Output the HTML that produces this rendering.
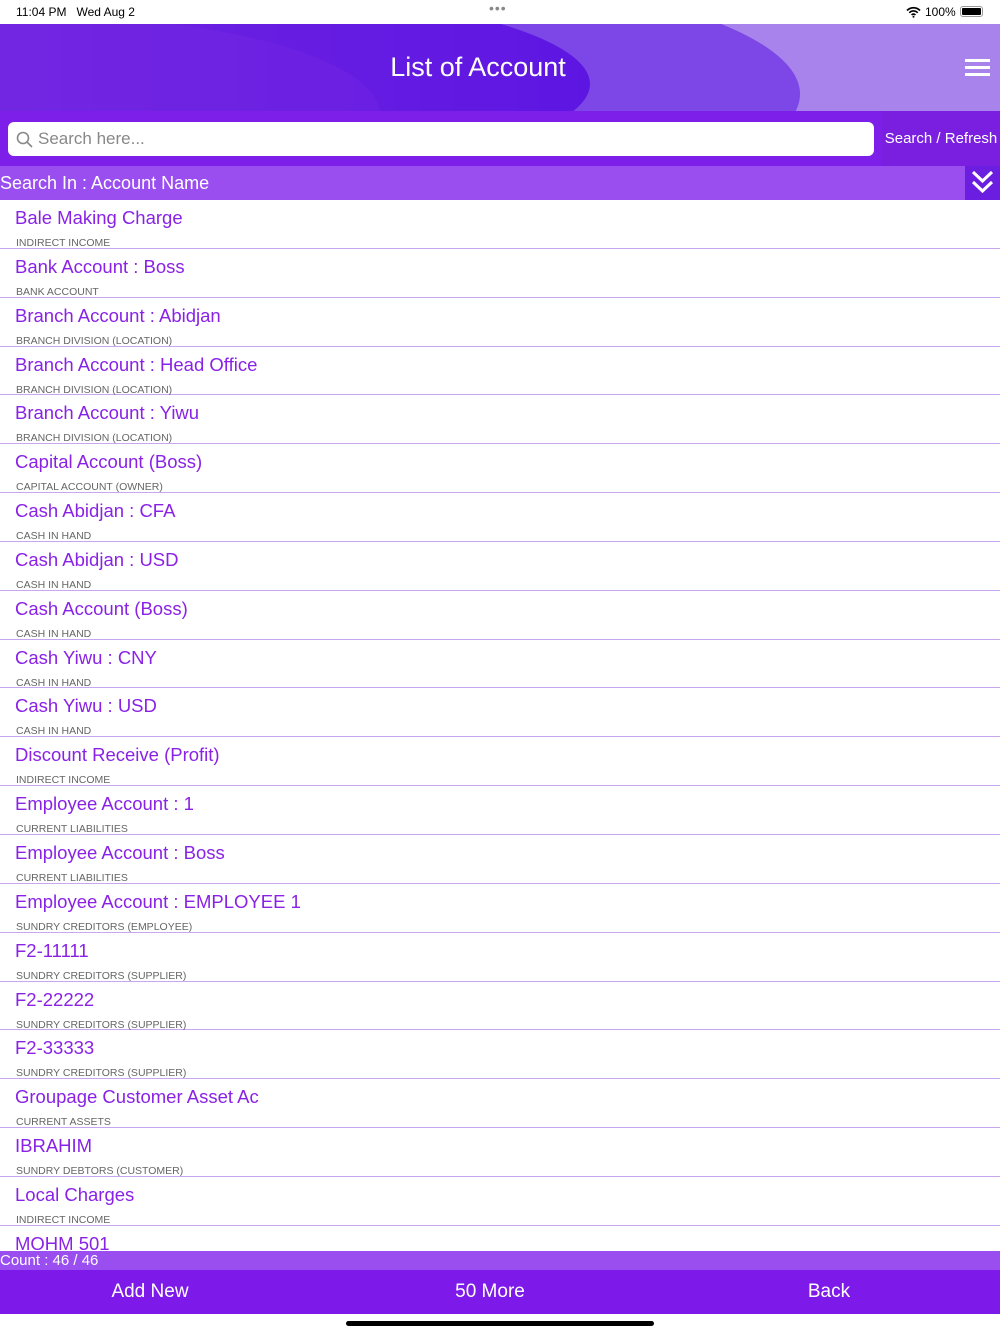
<!DOCTYPE html>
<html><head><style>
*{margin:0;padding:0;box-sizing:border-box}
body{width:1000px;height:1334px;overflow:hidden;background:#fff;font-family:"Liberation Sans",sans-serif;position:relative}
.status{position:absolute;top:0;left:0;width:1000px;height:24px;font-size:12px;color:#000}
.hdr{position:absolute;top:24px;left:0;width:1000px;height:87px;overflow:hidden;background:#a983ec}
.hdr .e{position:absolute;border-radius:50%}
.search{position:absolute;top:111px;left:0;width:1000px;height:55px;background:#7d1fe8}
.sin{position:absolute;top:166px;left:0;width:1000px;height:34px;background:#9a4ef0;color:#fff;font-size:18px;line-height:34px}
.list{position:absolute;top:200px;left:0;width:1000px;height:1051px;overflow:hidden}
.row{height:48.85px;border-bottom:1px solid #c9a6f2;position:relative}
.row .t{position:absolute;left:15px;top:7px;font-size:18.5px;color:#8a22e6}
.row .s{position:absolute;left:16px;top:37px;font-size:10.5px;color:#666}
.count{position:absolute;top:1251px;left:0;width:1000px;height:19px;background:#9a4ef0;color:#fff;font-size:15px;line-height:19px}
.foot{position:absolute;top:1270px;left:0;width:1000px;height:44px;background:#7d1ae9;color:#fff;font-size:19px;line-height:44px}
.foot span{position:absolute;transform:translateX(-50%)}
</style></head><body>
<div class="status">
<span style="position:absolute;left:16px;top:5px">11:04 PM&nbsp;&nbsp; Wed Aug 2</span>
<span style="position:absolute;left:489px;top:0px;letter-spacing:1px;color:#888;font-size:14px">•••</span>
<svg style="position:absolute;left:906px;top:6px" width="15" height="12" viewBox="0 0 15 12"><path d="M1 4.5a9 9 0 0 1 13 0M3.3 6.8a5.7 5.7 0 0 1 8.4 0M5.6 9a2.5 2.5 0 0 1 3.8 0" fill="none" stroke="#000" stroke-width="1.7"/><circle cx="7.5" cy="10.8" r="1" fill="#000"/></svg>
<span style="position:absolute;left:925px;top:5px">100%</span>
<span style="position:absolute;left:960px;top:6px;width:23px;height:11px;border:1px solid #999;border-radius:3px;padding:1px"><span style="display:block;width:100%;height:100%;background:#000;border-radius:1px"></span></span>
</div>
<div class="hdr">
<div class="e" style="left:-200px;top:-60px;width:1000px;height:260px;background:#7c47e6"></div>
<div class="e" style="left:-300px;top:-40px;width:890px;height:200px;background:linear-gradient(90deg,#7a2be0,#5d16e2)"></div>
<div class="e" style="left:-350px;top:-10px;width:730px;height:200px;background:linear-gradient(90deg,#7b2de2,#6a1fe2)"></div>
<div style="position:absolute;left:0;top:0;width:1000px;height:87px;text-align:center;color:#fff;font-size:27px;line-height:87px;text-indent:-44px">List of Account</div>
<div style="position:absolute;left:965px;top:35px;width:25px;height:3px;background:#fff;box-shadow:0 7px 0 #fff,0 14px 0 #fff"></div>
</div>
<div class="search">
<div style="position:absolute;left:8px;top:11px;width:866px;height:34px;background:#fff;border-radius:6px">
<svg style="position:absolute;left:8px;top:9px" width="18" height="18" viewBox="0 0 18 18"><circle cx="7" cy="7" r="5.5" fill="none" stroke="#888" stroke-width="1.6"/><line x1="11" y1="11" x2="16" y2="16" stroke="#888" stroke-width="1.6"/></svg>
<span style="position:absolute;left:30px;top:7px;font-size:17px;color:#888">Search here...</span></div>
<div style="position:absolute;left:882px;top:0;width:118px;height:55px;background:#7a1fe0;color:#fff;font-size:15px;line-height:55px;text-align:center">Search / Refresh</div>
</div>
<div class="sin">Search In : Account Name
<div style="position:absolute;left:965px;top:0;width:35px;height:34px;background:#6b1de0">
<svg width="35" height="34" viewBox="0 0 35 34"><path d="M8 6l9.5 9 9.5-9M8 16l9.5 9 9.5-9" fill="none" stroke="#fff" stroke-width="3"/></svg></div></div>
<div class="list">
<div class="row"><div class="t">Bale Making Charge</div><div class="s">INDIRECT INCOME</div></div>
<div class="row"><div class="t">Bank Account : Boss</div><div class="s">BANK ACCOUNT</div></div>
<div class="row"><div class="t">Branch Account : Abidjan</div><div class="s">BRANCH DIVISION (LOCATION)</div></div>
<div class="row"><div class="t">Branch Account : Head Office</div><div class="s">BRANCH DIVISION (LOCATION)</div></div>
<div class="row"><div class="t">Branch Account : Yiwu</div><div class="s">BRANCH DIVISION (LOCATION)</div></div>
<div class="row"><div class="t">Capital Account (Boss)</div><div class="s">CAPITAL ACCOUNT (OWNER)</div></div>
<div class="row"><div class="t">Cash Abidjan : CFA</div><div class="s">CASH IN HAND</div></div>
<div class="row"><div class="t">Cash Abidjan : USD</div><div class="s">CASH IN HAND</div></div>
<div class="row"><div class="t">Cash Account (Boss)</div><div class="s">CASH IN HAND</div></div>
<div class="row"><div class="t">Cash Yiwu : CNY</div><div class="s">CASH IN HAND</div></div>
<div class="row"><div class="t">Cash Yiwu : USD</div><div class="s">CASH IN HAND</div></div>
<div class="row"><div class="t">Discount Receive (Profit)</div><div class="s">INDIRECT INCOME</div></div>
<div class="row"><div class="t">Employee Account : 1</div><div class="s">CURRENT LIABILITIES</div></div>
<div class="row"><div class="t">Employee Account : Boss</div><div class="s">CURRENT LIABILITIES</div></div>
<div class="row"><div class="t">Employee Account : EMPLOYEE 1</div><div class="s">SUNDRY CREDITORS (EMPLOYEE)</div></div>
<div class="row"><div class="t">F2-11111</div><div class="s">SUNDRY CREDITORS (SUPPLIER)</div></div>
<div class="row"><div class="t">F2-22222</div><div class="s">SUNDRY CREDITORS (SUPPLIER)</div></div>
<div class="row"><div class="t">F2-33333</div><div class="s">SUNDRY CREDITORS (SUPPLIER)</div></div>
<div class="row"><div class="t">Groupage Customer Asset Ac</div><div class="s">CURRENT ASSETS</div></div>
<div class="row"><div class="t">IBRAHIM</div><div class="s">SUNDRY DEBTORS (CUSTOMER)</div></div>
<div class="row"><div class="t">Local Charges</div><div class="s">INDIRECT INCOME</div></div>
<div class="row"><div class="t">MOHM 501</div><div class="s">SUNDRY DEBTORS (CUSTOMER)</div></div>
</div>
<div class="count">Count : 46 / 46</div>
<div class="foot"><span style="left:150px">Add New</span><span style="left:490px">50 More</span><span style="left:829px">Back</span></div>
<div style="position:absolute;left:346px;top:1321px;width:308px;height:5px;background:#000;border-radius:3px"></div>
</body></html>
